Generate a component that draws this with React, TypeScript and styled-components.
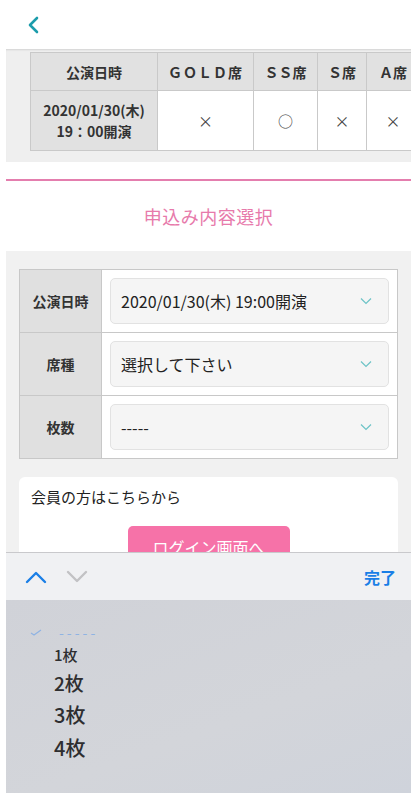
import React from "react";
import styled, { createGlobalStyle } from "styled-components";

const GlobalStyle = createGlobalStyle`
  html, body {
    margin: 0;
    padding: 0;
    background: #fff;
  }
  body {
    font-family: "Noto Sans CJK JP", "Noto Sans", sans-serif;
    color: #222;
  }
`;

const Page = styled.div`
  position: relative;
  width: 405px;
  height: 793px;
  margin-left: 6px;
  overflow: hidden;
  background: #fff;
`;

const Header = styled.header`
  height: 49px;
  display: flex;
  align-items: center;
  padding-left: 21px;
  background: #fff;
`;

const ScheduleSection = styled.section`
  background: #efefef;
  padding: 3px 0 11px 24px;
  overflow: hidden;
  box-shadow: inset 0 2px 2px -1px rgba(0, 0, 0, 0.12);
`;

const ScheduleTable = styled.table`
  border-collapse: collapse;
  table-layout: fixed;
  font-size: 14px;
  font-weight: 700;
  color: #333;
  white-space: nowrap;
`;

const HeadCell = styled.th<{ $w: number; $spaced?: boolean }>`
  width: ${(p) => p.$w}px;
  min-width: ${(p) => p.$w}px;
  height: 37px;
  padding: 0;
  background: #e1e1e1;
  border: 1px solid #c9c9c9;
  font-weight: 700;
  letter-spacing: ${(p) => (p.$spaced ? "1px" : "0")};
`;

const DateCell = styled.td`
  height: 59px;
  padding: 0;
  background: #e1e1e1;
  border: 1px solid #c9c9c9;
  text-align: center;
  line-height: 21px;
`;

const MarkCell = styled.td`
  padding: 0;
  background: #fff;
  border: 1px solid #c9c9c9;
  text-align: center;
  font-weight: 400;
  font-size: 15px;
  color: #444;
`;

const Divider = styled.div`
  margin-top: 17px;
  height: 2px;
  background: #e47eae;
`;

const TitleBlock = styled.div`
  height: 70px;
  display: flex;
  align-items: center;
  justify-content: center;
  background: #fff;
`;

const Title = styled.h2`
  margin: 0;
  font-size: 18px;
  font-weight: 400;
  color: #e77aab;
  letter-spacing: 0.5px;
`;

const FormSection = styled.section`
  background: #f1f1f1;
  padding: 18px 13px 30px;
  display: flex;
  flex-direction: column;
  gap: 18px;
`;

const FormTable = styled.div`
  display: grid;
  grid-template-columns: 82px 1fr;
  border: 1px solid #c8c8c8;
  background: #fff;
`;

const Label = styled.div<{ $last?: boolean }>`
  height: 62px;
  display: flex;
  align-items: center;
  justify-content: center;
  background: #e0e0e0;
  border-right: 1px solid #c8c8c8;
  border-bottom: ${(p) => (p.$last ? "none" : "1px solid #c8c8c8")};
  font-size: 14px;
  font-weight: 700;
  color: #333;
`;

const SelectCell = styled.div<{ $last?: boolean }>`
  height: 62px;
  display: flex;
  align-items: center;
  padding: 0 8px 0 8px;
  border-bottom: ${(p) => (p.$last ? "none" : "1px solid #c8c8c8")};
`;

const SelectBox = styled.div`
  flex: 1;
  height: 44px;
  display: flex;
  align-items: center;
  justify-content: space-between;
  padding: 0 16px 0 10px;
  background: #f5f5f5;
  border: 1px solid #e2e2e2;
  border-radius: 5px;
  font-size: 16px;
  color: #222;
`;

const MemberBox = styled.div`
  background: #fff;
  border-radius: 6px;
  padding: 9px 12px 20px;
  display: flex;
  flex-direction: column;
  align-items: center;
`;

const MemberText = styled.p`
  align-self: flex-start;
  margin: 0;
  font-size: 15px;
  line-height: 22px;
  color: #222;
`;

const LoginButton = styled.button`
  margin-top: 18px;
  width: 162px;
  height: 42px;
  border: none;
  border-radius: 5px;
  background: #f672a8;
  color: #fff;
  font-family: inherit;
  font-size: 16px;
`;

const Keyboard = styled.div`
  position: absolute;
  left: 0;
  right: 0;
  bottom: 0;
  height: 241px;
  display: flex;
  flex-direction: column;
`;

const Toolbar = styled.div`
  height: 47px;
  display: flex;
  align-items: center;
  padding: 0 15px 0 19px;
  gap: 19px;
  background: #f0f1f3;
  border-top: 1px solid #c9c9cc;
`;

const Done = styled.span`
  margin-left: auto;
  font-size: 16px;
  font-weight: 700;
  color: #1a7fe6;
`;

const Picker = styled.div`
  flex: 1;
  background: linear-gradient(160deg, #d0d2d8 0%, #d3d5da 60%, #cfd3db 100%);
  padding: 22px 0 0 24px;
  display: flex;
  flex-direction: column;
`;

const PickerRow = styled.div<{ $size: number; $h: number }>`
  height: ${(p) => p.$h}px;
  display: flex;
  align-items: center;
  padding-left: 24px;
  font-size: ${(p) => p.$size}px;
  font-weight: 500;
  color: #2e2e30;
`;

const SelectedRow = styled.div`
  height: 20px;
  display: flex;
  align-items: center;
  gap: 17px;
  font-size: 14px;
  color: #8fb3e3;
  letter-spacing: 3px;
`;

const Chevron = ({ color, up }: { color: string; up?: boolean }) => (
  <svg width={22} height={14} viewBox="0 0 22 14">
    <polyline
      points={up ? "2,12 11,3 20,12" : "2,2 11,11 20,2"}
      fill="none"
      stroke={color}
      strokeWidth={2.4}
      strokeLinecap="round"
      strokeLinejoin="round"
    />
  </svg>
);

const SmallChevron = () => (
  <svg width={12} height={8} viewBox="0 0 12 8">
    <polyline points="1,1.5 6,6.5 11,1.5" fill="none" stroke="#6cc3c6" strokeWidth={1.2} />
  </svg>
);

const seats = [
  { name: "ＧＯＬＤ席", w: 95, mark: "×", spaced: true },
  { name: "ＳＳ席", w: 63, mark: "○", spaced: false },
  { name: "Ｓ席", w: 48, mark: "×", spaced: false },
  { name: "Ａ席", w: 52, mark: "×", spaced: false },
];

const rows = [
  { label: "公演日時", value: "2020/01/30(木) 19:00開演" },
  { label: "席種", value: "選択して下さい" },
  { label: "枚数", value: "-----" },
];

const App: React.FC = () => {
  return (
    <Page>
      <GlobalStyle />
      <Header>
        <svg width={14} height={18} viewBox="0 0 14 18">
          <polyline
            points="10,2 3,9 10,16"
            fill="none"
            stroke="#1c9cab"
            strokeWidth={2.6}
            strokeLinecap="round"
            strokeLinejoin="round"
          />
        </svg>
      </Header>

      <ScheduleSection>
        <ScheduleTable>
          <thead>
            <tr>
              <HeadCell $w={126}>公演日時</HeadCell>
              {seats.map((s) => (
                <HeadCell key={s.name} $w={s.w} $spaced={s.spaced}>
                  {s.name}
                </HeadCell>
              ))}
            </tr>
          </thead>
          <tbody>
            <tr>
              <DateCell>
                2020/01/30(木)
                <br />
                19：00開演
              </DateCell>
              {seats.map((s) => (
                <MarkCell key={s.name}>{s.mark}</MarkCell>
              ))}
            </tr>
          </tbody>
        </ScheduleTable>
      </ScheduleSection>

      <Divider />
      <TitleBlock>
        <Title>申込み内容選択</Title>
      </TitleBlock>

      <FormSection>
        <FormTable>
          {rows.map((r, i) => (
            <React.Fragment key={r.label}>
              <Label $last={i === rows.length - 1}>{r.label}</Label>
              <SelectCell $last={i === rows.length - 1}>
                <SelectBox>
                  <span>{r.value}</span>
                  <SmallChevron />
                </SelectBox>
              </SelectCell>
            </React.Fragment>
          ))}
        </FormTable>

        <MemberBox>
          <MemberText>会員の方はこちらから</MemberText>
          <LoginButton>ログイン画面へ</LoginButton>
        </MemberBox>
      </FormSection>

      <Keyboard>
        <Toolbar>
          <Chevron color="#1a7fe6" up />
          <Chevron color="#c2c2c4" />
          <Done>完了</Done>
        </Toolbar>
        <Picker>
          <SelectedRow>
            <svg width={12} height={8} viewBox="0 0 12 8">
              <polyline points="1,5 4,7 11,2" fill="none" stroke="#8fb3e3" strokeWidth={1.2} />
            </svg>
            <span>-----</span>
          </SelectedRow>
          <PickerRow $size={15} $h={24}>1枚</PickerRow>
          <PickerRow $size={19} $h={32}>2枚</PickerRow>
          <PickerRow $size={20} $h={33}>3枚</PickerRow>
          <PickerRow $size={20} $h={33}>4枚</PickerRow>
        </Picker>
      </Keyboard>
    </Page>
  );
};

export default App;
